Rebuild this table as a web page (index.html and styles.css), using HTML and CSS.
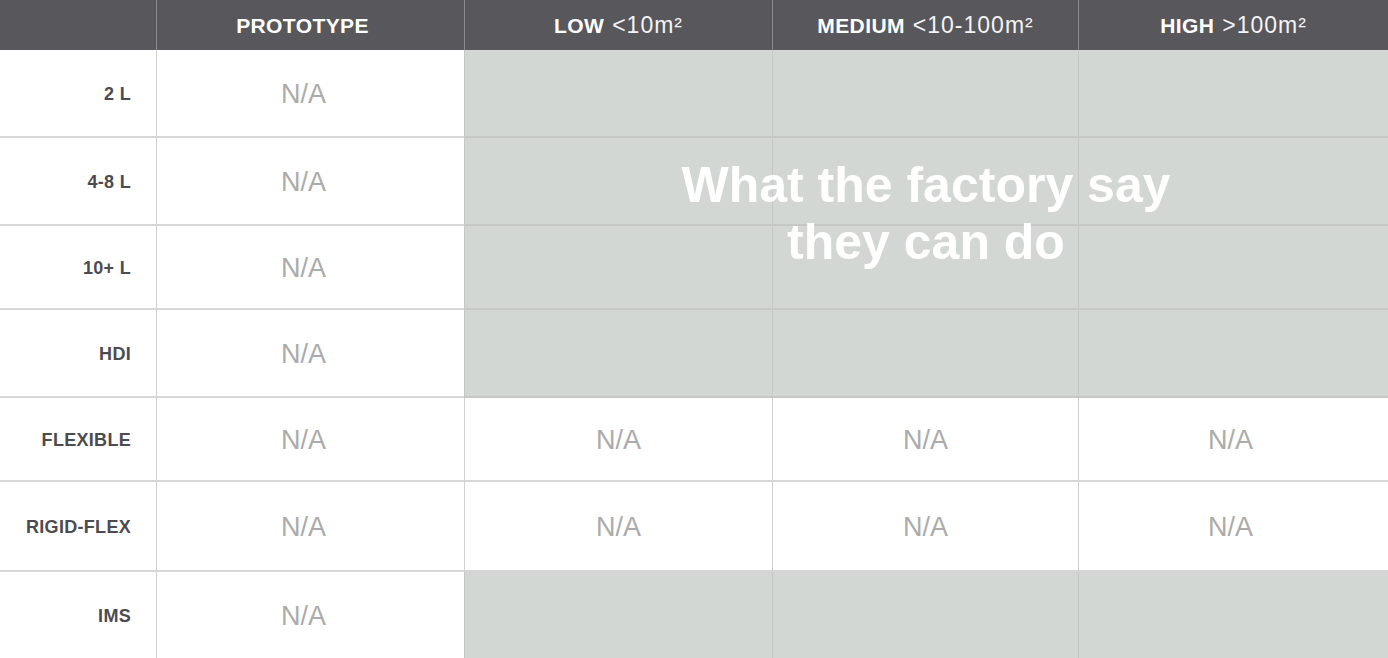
FILE: index.html
```html
<!DOCTYPE html>
<html lang="en">
<head>
<meta charset="utf-8">
<title>PCB capability matrix</title>
<link rel="stylesheet" href="styles.css">
</head>
<body>
<div class="matrix">
  <div class="head"></div>
  <div class="head col proto"><b>PROTOTYPE</b></div>
  <div class="head col"><b>LOW</b> <span class="range">&lt;10m²</span></div>
  <div class="head col"><b>MEDIUM</b> <span class="range">&lt;10-100m²</span></div>
  <div class="head col"><b>HIGH</b> <span class="range">&gt;100m²</span></div>

  <div class="label">2 L</div>
  <div class="cell col proto">N/A</div>
  <div class="factory">
    <div class="fgrid">
      <div class="fcell"></div><div class="fcell"></div><div class="fcell"></div>
      <div class="fcell"></div><div class="fcell"></div><div class="fcell"></div>
      <div class="fcell"></div><div class="fcell"></div><div class="fcell"></div>
      <div class="fcell"></div><div class="fcell"></div><div class="fcell"></div>
    </div>
    <div class="caption">What the factory say<br>they can do</div>
  </div>

  <div class="label">4-8 L</div>
  <div class="cell col proto">N/A</div>

  <div class="label">10+ L</div>
  <div class="cell col proto">N/A</div>

  <div class="label">HDI</div>
  <div class="cell col proto">N/A</div>

  <div class="label">FLEXIBLE</div>
  <div class="cell col proto">N/A</div>
  <div class="cell col">N/A</div>
  <div class="cell col">N/A</div>
  <div class="cell col shift">N/A</div>

  <div class="label">RIGID-FLEX</div>
  <div class="cell col proto">N/A</div>
  <div class="cell col">N/A</div>
  <div class="cell col">N/A</div>
  <div class="cell col shift">N/A</div>

  <div class="label last">IMS</div>
  <div class="cell col last proto">N/A</div>
  <div class="cell col last grey"></div>
  <div class="cell col last grey"></div>
  <div class="cell col last grey"></div>
</div>
</body>
</html>
```

FILE: styles.css
```css
* { box-sizing: border-box; }

html, body {
  margin: 0;
  padding: 0;
  background: #ffffff;
}

body {
  font-family: "Liberation Sans", Arial, sans-serif;
  width: 1388px;
  height: 658px;
  overflow: hidden;
}

.matrix {
  display: grid;
  grid-template-columns: 156px 308px 308px 306px 310px;
  grid-template-rows: 50px 88px 88px 84px 88px 84px 90px 86px;
}

.head {
  background: #58575c;
  color: #ffffff;
  font-size: 21px;
  font-weight: 400;
  display: flex;
  align-items: center;
  justify-content: center;
  white-space: nowrap;
  padding-top: 1px;
}

.head b {
  font-weight: 700;
  letter-spacing: 0.4px;
  margin-right: 8px;
}

.head .range {
  font-size: 23px;
  letter-spacing: 1px;
  color: #f4f4f5;
}

.head.col {
  border-left: 1px solid #8a898d;
}

.head.proto {
  padding-right: 8px;
}

.label {
  display: flex;
  align-items: center;
  justify-content: flex-end;
  padding-right: 25px;
  padding-top: 2px;
  font-size: 18px;
  font-weight: 700;
  color: #4c4b50;
  letter-spacing: 0.3px;
  border-bottom: 2px solid #d6d6d6;
}

.cell {
  display: flex;
  align-items: center;
  justify-content: center;
  padding-top: 2px;
  font-size: 27px;
  font-weight: 400;
  color: #ababab;
  border-bottom: 2px solid #d6d6d6;
}

.cell.proto {
  padding-right: 14px;
}

.cell.shift {
  padding-right: 6px;
}

.col {
  border-left: 1px solid #d0d0d0;
}

.last {
  border-bottom: none;
}

.grey {
  background: #d3d7d3;
  border-left-color: #c6c8c6;
}

.factory {
  grid-column: 3 / span 3;
  grid-row: 2 / span 4;
  position: relative;
  background: #d3d7d3;
}

.fgrid {
  display: grid;
  grid-template-columns: 308px 306px 310px;
  grid-template-rows: 88px 88px 84px 88px;
  height: 100%;
}

.fcell {
  border-left: 1px solid #c6c8c6;
  border-bottom: 2px solid #c6c8c6;
}

.caption {
  position: absolute;
  inset: 0;
  display: flex;
  align-items: center;
  justify-content: center;
  text-align: center;
  padding-bottom: 20px;
  color: #ffffff;
  font-size: 50px;
  line-height: 57px;
  font-weight: 700;
}
```
